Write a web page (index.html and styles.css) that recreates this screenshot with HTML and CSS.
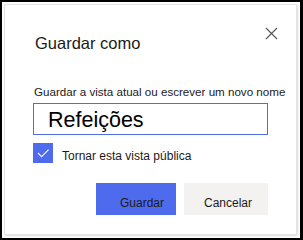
FILE: index.html
```html
<!DOCTYPE html>
<html lang="pt">
<head>
<meta charset="utf-8">
<link rel="stylesheet" href="styles.css">
</head>
<body>
<div class="frame">
  <div class="dialog">
    <div class="header">
      <div class="title">Guardar como</div>
      <div class="close">
        <svg width="13" height="13" viewBox="0 0 13 13"><path d="M1 1 L12 12 M12 1 L1 12" stroke="#5a5a5a" stroke-width="1.2" fill="none"/></svg>
      </div>
    </div>
    <div class="label">Guardar a vista atual ou escrever um novo nome</div>
    <div class="input">Refeições</div>
    <div class="check-row">
      <div class="checkbox">
        <svg width="20" height="20" viewBox="0 0 20 20"><path d="M5 10 L8.6 13.6 L15.6 6.6" stroke="#eef1fd" stroke-width="1.3" fill="none"/></svg>
      </div>
      <div class="check-label">Tornar esta vista pública</div>
    </div>
    <div class="buttons">
      <div class="btn primary">Guardar</div>
      <div class="btn secondary">Cancelar</div>
    </div>
  </div>
</div>
</body>
</html>
```
FILE: styles.css
```css
html, body {
  margin: 0;
  padding: 0;
  background: #fff;
}
body {
  font-family: "Liberation Sans", Arial, sans-serif;
  color: #1b1a19;
}
.frame {
  width: 303px;
  height: 240px;
  box-sizing: border-box;
  border: 2px solid #000;
  border-right-width: 3px;
  border-bottom-width: 2px;
  padding: 2px 3px 3px 2px;
  display: flex;
}
.dialog {
  flex: 1;
  min-width: 0;
  background: #fff;
  box-shadow: inset 0 0 0 1px #e4e4e4, 1px 1px 2px rgba(0,0,0,0.14);
  padding: 28px 29px 0 29px;
  display: flex;
  flex-direction: column;
}
.header {
  display: flex;
  justify-content: space-between;
  align-items: flex-start;
}
.title {
  font-size: 16.5px;
  line-height: 22px;
  margin-left: 2px;
}
.close {
  width: 13px;
  height: 13px;
  margin-top: -5px;
  margin-right: -10px;
}
.close svg { display: block; }
.label {
  font-size: 11.6px;
  line-height: 14px;
  margin-top: 31px;
  margin-left: 1px;
  white-space: nowrap;
}
.input {
  margin-top: 4px;
  height: 32px;
  box-sizing: border-box;
  border: 1px solid #4f6bed;
  font-size: 21.5px;
  line-height: 27px;
  padding: 3px 0 0 14px;
  color: #000;
}
.check-row {
  display: flex;
  align-items: flex-start;
  margin-top: 8px;
}
.checkbox {
  width: 20px;
  height: 20px;
  background: #4f6bed;
}
.checkbox svg { display: block; }
.check-label {
  font-size: 12px;
  line-height: 20px;
  margin-top: 3px;
  margin-left: 9px;
}
.buttons {
  display: flex;
  justify-content: flex-end;
  gap: 8px;
  margin-top: 17px;
}
.btn {
  height: 32px;
  box-sizing: border-box;
  font-size: 12px;
  line-height: 24px;
  padding-top: 8px;
  color: #1b1a19;
}
.primary {
  width: 80px;
  padding-left: 24px;
  background: #4f6bed;
}
.secondary {
  width: 84px;
  padding-left: 20px;
  background: #f3f2f1;
}
```
